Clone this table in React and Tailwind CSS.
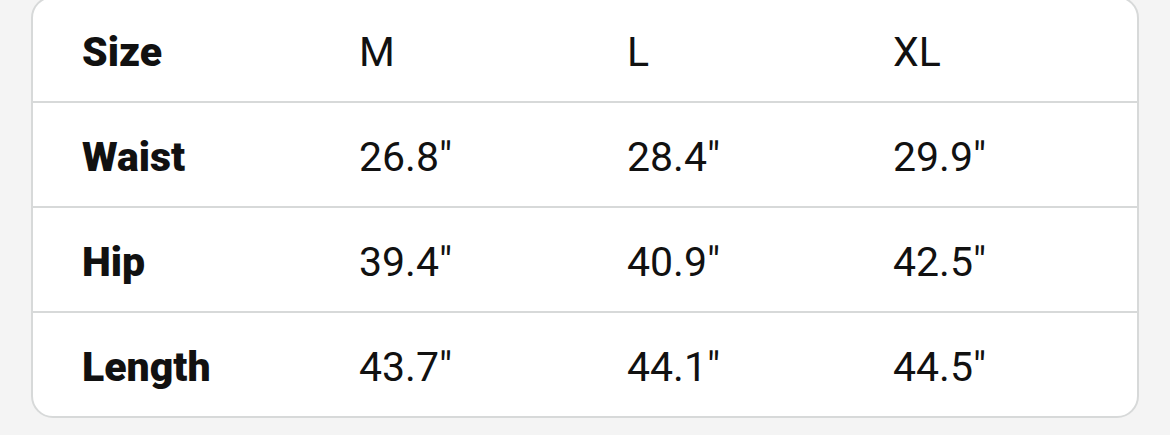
const rows = [
  { label: "Size", values: ["M", "L", "XL"] },
  { label: "Waist", values: ['26.8"', '28.4"', '29.9"'] },
  { label: "Hip", values: ['39.4"', '40.9"', '42.5"'] },
  { label: "Length", values: ['43.7"', '44.1"', '44.5"'] },
];

const App = () => {
  return (
    <div className="h-[435px] w-full overflow-hidden bg-[#f4f4f4] px-[31px] font-['Roboto',sans-serif] text-[#111111]">
      <div className="-mt-[4px] w-[1108px] overflow-hidden rounded-[22px] border-2 border-[#d7d9d9] bg-white">
        {rows.map((row, i) => (
          <div
            key={row.label}
            className={`grid grid-cols-[277px_268px_266px_1fr] items-center pt-[5px] text-[41px] leading-none ${
              i > 0 ? "h-[105px] border-t-2 border-[#d7d9d9]" : "h-[103px]"
            }`}
          >
            <div className="pl-[49px] font-black">{row.label}</div>
            {row.values.map((v, j) => (
              <div key={j} className="pl-[49px]">
                {v}
              </div>
            ))}
          </div>
        ))}
      </div>
    </div>
  );
};

export default App;
